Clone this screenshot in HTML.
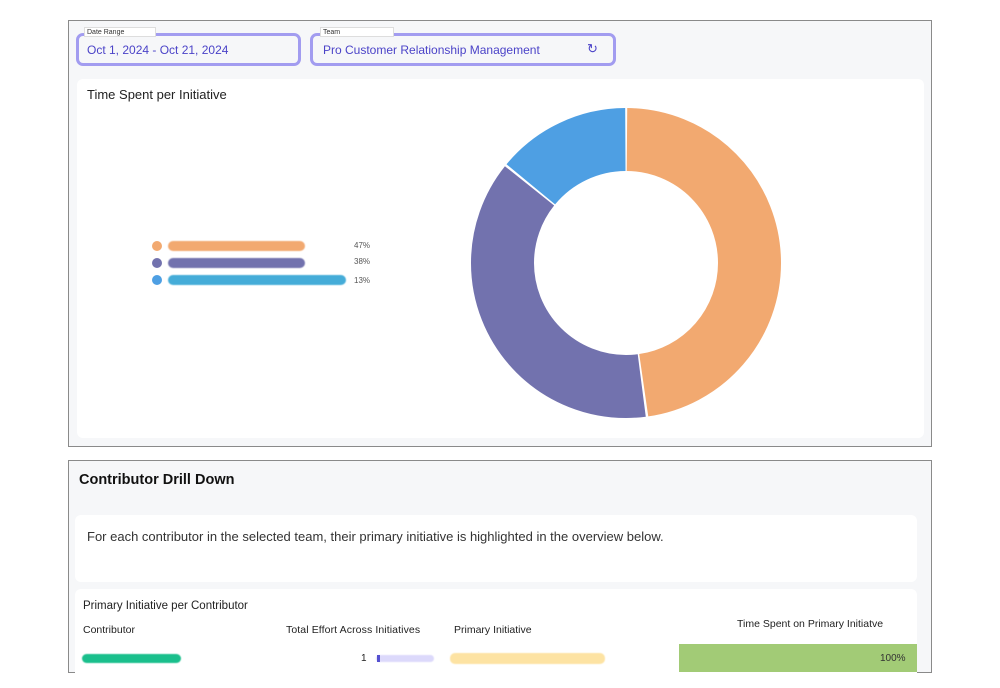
<!DOCTYPE html><html><head><style>
body{margin:0;width:1000px;height:688px;background:#fff;font-family:"Liberation Sans",sans-serif;position:relative;overflow:hidden}
.a{position:absolute}
.panel{position:absolute;border:1px solid #8a8a8a;background:#f6f7f9;box-sizing:border-box}
.card{position:absolute;background:#fff;border-radius:6px}
.sel{position:absolute;border:3px solid #a29cf0;border-radius:7px;box-sizing:border-box;color:#4b43c8;font-size:12px}
.lab{position:absolute;background:#fff;border:1px solid #ddd;font-size:7px;color:#333;padding:1px 2px;height:10px;box-sizing:border-box;line-height:7px}
.bar{position:absolute;height:10px;border-radius:5px;filter:blur(.6px)}
.dot{position:absolute;width:10px;height:10px;border-radius:5px}
</style></head><body>
<div class="panel" style="left:68px;top:20px;width:864px;height:427px"></div>
<div class="sel" style="left:76px;top:33px;width:225px;height:33px"><span class="a" style="left:8px;top:7px">Oct 1, 2024 - Oct 21, 2024</span></div>
<div class="lab" style="left:84px;top:27px;width:72px">Date Range</div>
<div class="sel" style="left:310px;top:33px;width:306px;height:33px"><span class="a" style="left:10px;top:7px">Pro Customer Relationship Management</span><span class="a" style="left:274px;top:5px;font-size:13px">↻</span></div>
<div class="lab" style="left:320px;top:27px;width:74px">Team</div>
<div class="card" style="left:77px;top:79px;width:847px;height:359px"></div>
<div class="a" style="left:87px;top:87px;font-size:13px;color:#222">Time Spent per Initiative</div>
<div class="dot" style="left:152px;top:241px;background:#f2a970"></div><div class="bar" style="left:168px;top:241px;width:137px;background:#f2a970"></div>
<div class="dot" style="left:152px;top:258px;background:#7272ae"></div><div class="bar" style="left:168px;top:258px;width:137px;background:#7272ae"></div>
<div class="dot" style="left:152px;top:275px;background:#4e9fe3"></div><div class="bar" style="left:168px;top:275px;width:178px;background:#45acd8"></div>
<div class="a" style="left:354px;top:241px;font-size:8px;color:#555">47%</div>
<div class="a" style="left:354px;top:257px;font-size:8px;color:#555">38%</div>
<div class="a" style="left:354px;top:276px;font-size:8px;color:#555">13%</div>
<svg class="a" style="left:0;top:0" width="1000" height="688">
<g transform="rotate(-90 626 263)" fill="none" stroke-width="63">
<circle cx="626" cy="263" r="123.5" stroke="#f2a970" stroke-dasharray="369 407" stroke-dashoffset="-1"/>
<circle cx="626" cy="263" r="123.5" stroke="#7272ae" stroke-dasharray="293 483" stroke-dashoffset="-372"/>
<circle cx="626" cy="263" r="123.5" stroke="#4e9fe3" stroke-dasharray="108 668" stroke-dashoffset="-667"/>
</g></svg>
<div class="panel" style="left:68px;top:460px;width:864px;height:213px"></div>
<div class="a" style="left:79px;top:472px;font-size:14.5px;font-weight:bold;color:#111">Contributor Drill Down</div>
<div class="card" style="left:75px;top:515px;width:842px;height:67px"></div>
<div class="a" style="left:87px;top:529px;font-size:13px;color:#333">For each contributor in the selected team, their primary initiative is highlighted in the overview below.</div>
<div class="card" style="left:75px;top:589px;width:842px;height:90px"></div>
<div class="a" style="left:83px;top:600px;font-size:11.5px;color:#222">Primary Initiative per Contributor</div>
<div class="a" style="left:83px;top:624px;font-size:10.5px;color:#222">Contributor</div>
<div class="a" style="left:286px;top:624px;font-size:10.5px;color:#222;letter-spacing:.1px">Total Effort Across Initiatives</div>
<div class="a" style="left:454px;top:624px;font-size:10.5px;color:#222">Primary Initiative</div>
<div class="a" style="left:737px;top:618px;font-size:10.5px;color:#222">Time Spent on Primary Initiatve</div>
<div class="bar" style="left:82px;top:654px;width:99px;height:9px;background:#1abf8c"></div>
<div class="a" style="left:361px;top:653px;font-size:10px;color:#222">1</div>
<div class="bar" style="left:376px;top:655px;width:58px;height:7px;background:#dcd9fb"></div>
<div class="a" style="left:377px;top:655px;width:3px;height:7px;background:#5550d0"></div>
<div class="bar" style="left:450px;top:653px;width:155px;height:11px;background:#fde3a3"></div>
<div class="a" style="left:679px;top:644px;width:238px;height:28px;background:#a2cb76"></div>
<div class="a" style="left:880px;top:653px;font-size:10px;color:#333">100%</div>
</body></html>
